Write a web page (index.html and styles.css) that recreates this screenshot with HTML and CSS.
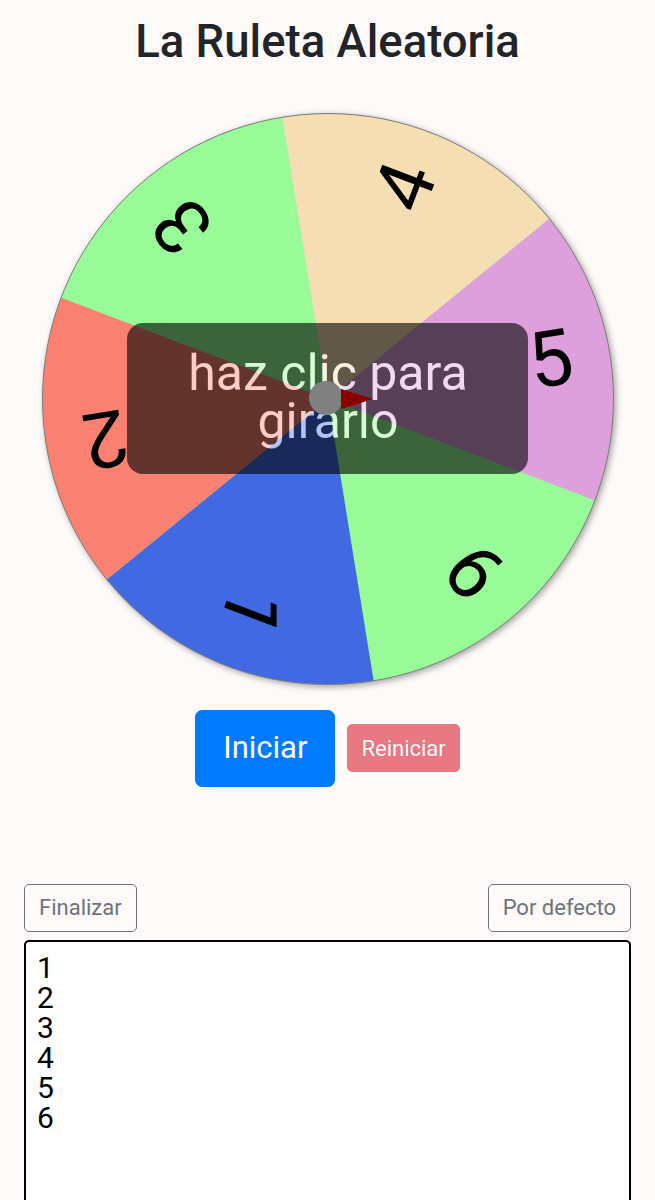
FILE: index.html
```html
<!DOCTYPE html>
<html lang="es">
<head>
    <meta charset="UTF-8">
    <meta name="viewport" content="width=device-width, initial-scale=1.0">
    <title>La Ruleta Aleatoria</title>
    <link rel="stylesheet" href="styles.css">
</head>
<body>

    <div class="container">
        <h1>La Ruleta Aleatoria</h1>

        <div class="wheel-box">
            <svg class="wheel" width="580" height="580" viewBox="0 0 580 580">
                <g transform="translate(290 290)">
                    <circle r="285.5" fill="#98fb98"/>
                    <!-- wedges, 60deg each -->
                    <path transform="rotate(-39.2)" fill="plum" d="M0 0 L285.5 0 A285.5 285.5 0 0 1 142.75 247.25 Z"/>
                    <path transform="rotate(20.8)" fill="palegreen" d="M0 0 L285.5 0 A285.5 285.5 0 0 1 142.75 247.25 Z"/>
                    <path transform="rotate(80.8)" fill="royalblue" d="M0 0 L285.5 0 A285.5 285.5 0 0 1 142.75 247.25 Z"/>
                    <path transform="rotate(140.8)" fill="salmon" d="M0 0 L285.5 0 A285.5 285.5 0 0 1 142.75 247.25 Z"/>
                    <path transform="rotate(200.8)" fill="palegreen" d="M0 0 L285.5 0 A285.5 285.5 0 0 1 142.75 247.25 Z"/>
                    <path transform="rotate(260.8)" fill="wheat" d="M0 0 L285.5 0 A285.5 285.5 0 0 1 142.75 247.25 Z"/>
                    <circle r="285.5" fill="none" stroke="#7a7a7a" stroke-width="1"/>

                    <g class="labels">
                        <text transform="rotate(-9.2)" x="226" y="23">5</text>
                        <text transform="rotate(50.8)" x="226" y="23">6</text>
                        <text transform="rotate(110.8)" x="226" y="23">1</text>
                        <text transform="rotate(170.8)" x="226" y="23">2</text>
                        <text transform="rotate(230.8)" x="226" y="23">3</text>
                        <text transform="rotate(290.8)" x="226" y="23">4</text>
                    </g>
                </g>

                <!-- "click to spin" hint -->
                <g class="hint" opacity="0.6">
                    <rect x="89" y="214" width="401" height="151" rx="16" fill="#000"/>
                    <text x="290" y="281">haz clic para</text>
                    <text x="290" y="329">girarlo</text>
                </g>

                <!-- hub and pointer -->
                <circle cx="288" cy="289" r="17" fill="#808080"/>
                <polygon points="303,280 335,290 303,300" fill="#8b0000"/>
            </svg>
        </div>

        <div class="controls">
            <button id="start-button" class="btn btn-primary btn-lg">Iniciar</button>
            <button id="reset-button" class="btn btn-danger" disabled>Reiniciar</button>
        </div>

        <div class="options">
            <button id="finish-button" class="btn btn-outline">Finalizar</button>
            <button id="default-button" class="btn btn-outline">Por defecto</button>
        </div>
        <textarea id="items-box" class="items">1
2
3
4
5
6</textarea>
    </div>

</body>
</html>
```

FILE: styles.css
```css
* {
    margin: 0;
    padding: 0;
    box-sizing: border-box;
}

body {
    font-family: 'Roboto', 'Liberation Sans', sans-serif;
    background-color: #fffafa;
    color: #212529;
    overflow: hidden;
}

.container {
    padding: 0 24px;
}

h1 {
    font-size: 45.5px;
    font-weight: 500;
    line-height: 54px;
    text-align: center;
    margin: 15px 0 40px;
    color: #212529;
}

.wheel-box {
    display: flex;
    justify-content: center;
    margin: 0 -24px;
}

.wheel {
    display: block;
    filter: drop-shadow(2px 2px 3px rgba(0, 0, 0, 0.35));
}

.labels text {
    font-family: 'Roboto', sans-serif;
    font-size: 78px;
    text-anchor: middle;
    fill: #000;
}

.hint text {
    font-family: 'Roboto', sans-serif;
    font-size: 50px;
    text-anchor: middle;
    fill: #fff;
}

.controls {
    display: flex;
    justify-content: center;
    align-items: center;
    gap: 12px;
    margin-top: 21px;
}

.btn {
    font-family: 'Roboto', sans-serif;
    font-size: 22px;
    line-height: 1.5;
    padding: 6.5px 14px;
    border: 1px solid transparent;
    border-radius: 5px;
    background: transparent;
    cursor: pointer;
}

.btn-primary {
    background-color: #007bff;
    border-color: #007bff;
    color: #fff;
}

.btn-lg {
    font-size: 31px;
    padding: 14px 27px;
    border-radius: 7px;
}

.btn-danger {
    background-color: #dc3545;
    border-color: #dc3545;
    color: #fff;
    padding: 6.5px 13px;
}

.btn-danger:disabled {
    opacity: 0.65;
    cursor: default;
}

.btn-outline {
    border-color: #6c757d;
    color: #6c757d;
}

.options {
    display: flex;
    justify-content: space-between;
    margin-top: 97px;
    margin-bottom: 8px;
}

.items {
    display: block;
    width: 100%;
    height: 320px;
    font-family: 'Roboto', sans-serif;
    font-size: 30px;
    line-height: 30px;
    color: #000;
    background: #fff;
    border: 2px solid #000;
    border-radius: 5px;
    padding: 11px 11px;
    resize: none;
    outline: none;
}
```
